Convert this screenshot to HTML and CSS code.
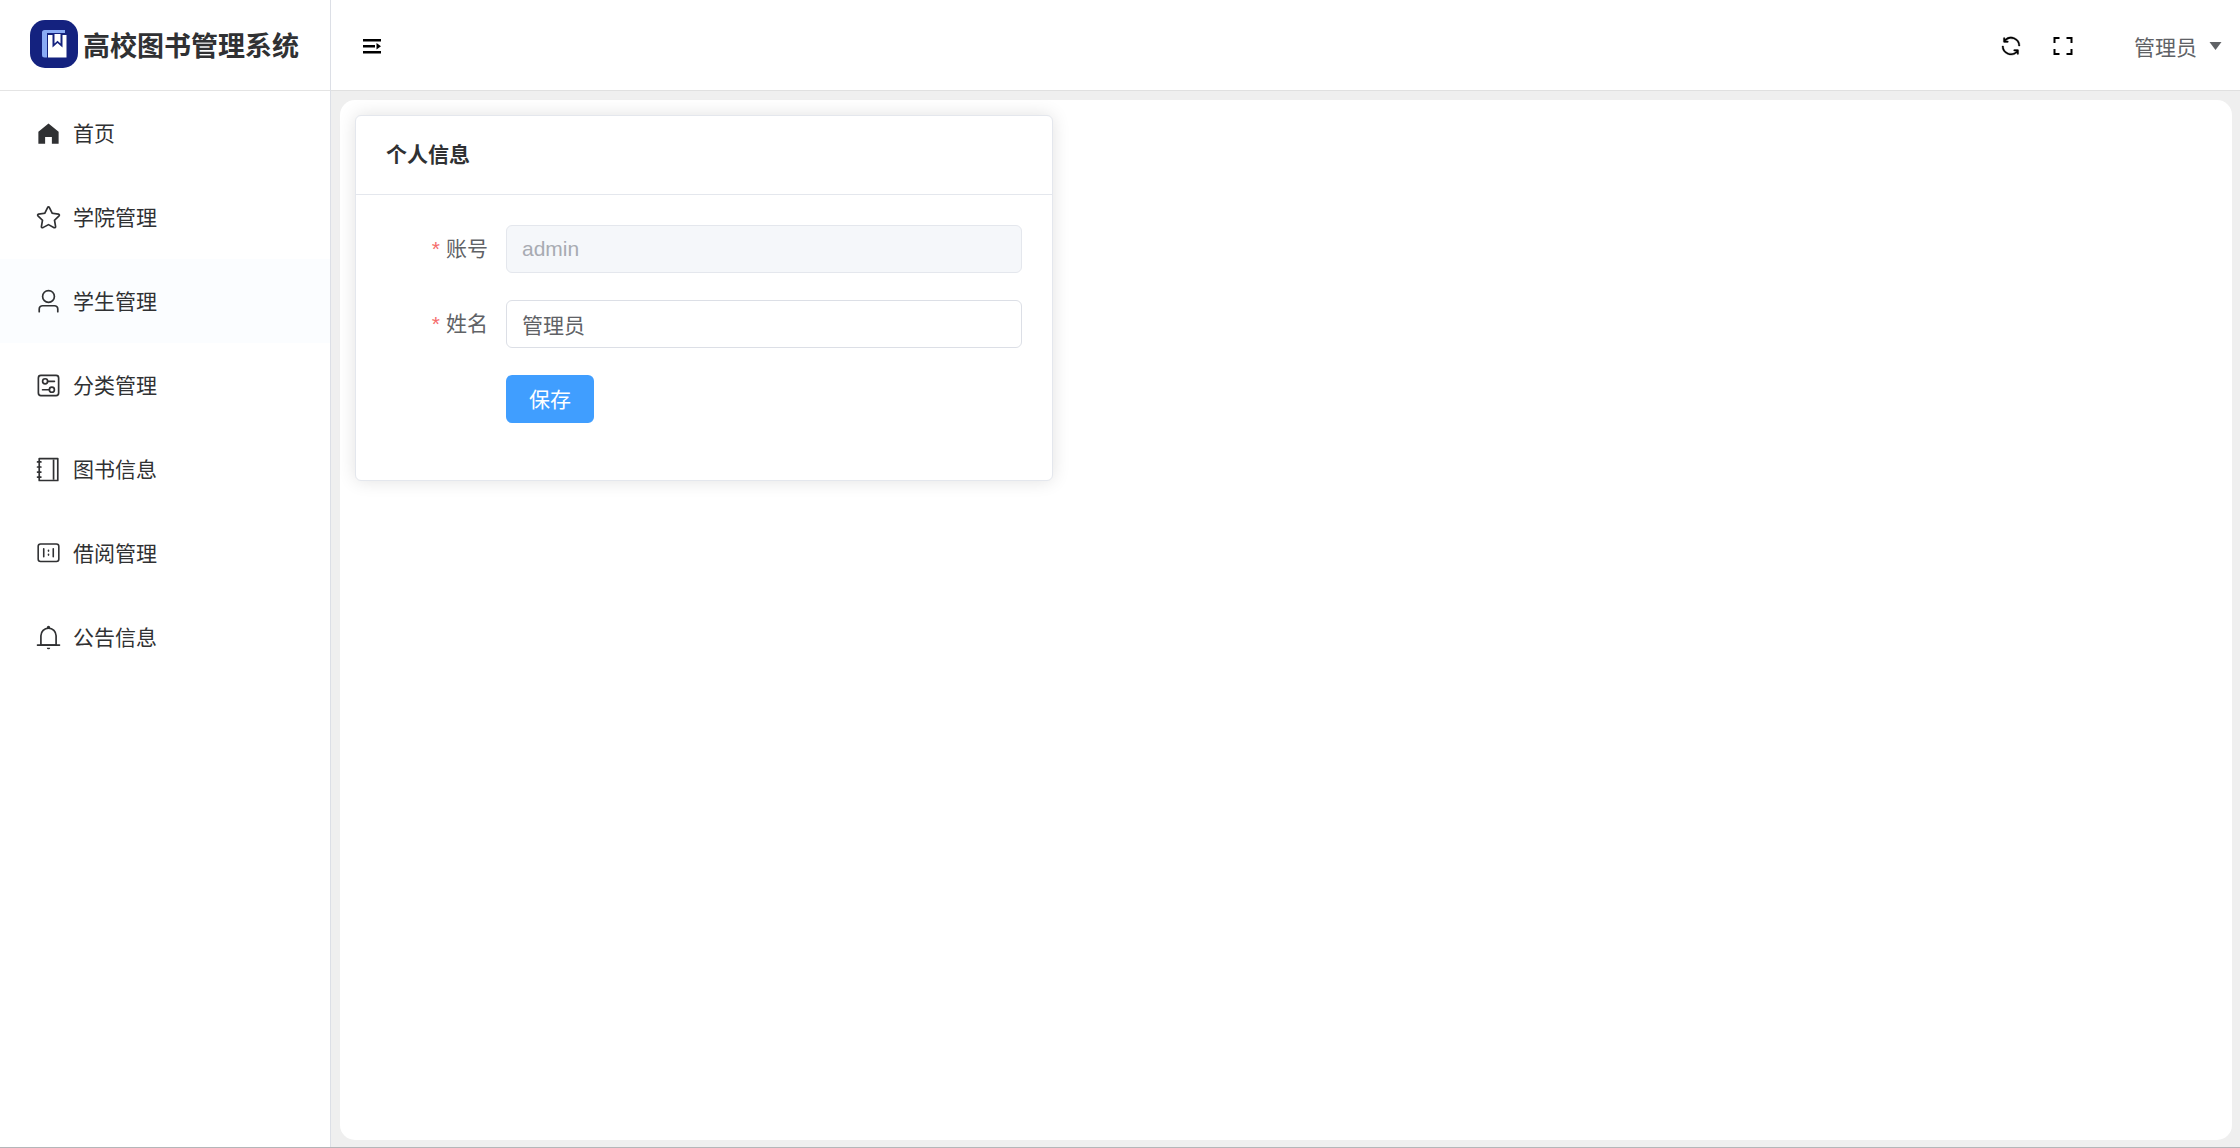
FILE: index.html
```html
<!DOCTYPE html>
<html lang="zh-CN">
<head>
    <meta charset="UTF-8">
    <meta name="viewport" content="width=device-width, initial-scale=1.0">
    <title>高校图书管理系统</title>
    <link rel="stylesheet" href="styles.css">
</head>
<body>
    <div class="layout">
        <aside class="sidebar">
            <div class="logo">
                <svg class="logo-icon" viewBox="0 0 48 48">
                    <rect width="48" height="48" rx="15" fill="#14227f"/>
                    <path d="M14.500 10H35v3H17v24.500h-2.500a2.500 2.500 0 0 1-2.500-2.500V12.500a2.500 2.500 0 0 1 2.500-2.500z" fill="#8aabf5"/>
                    <path d="M18 15h18.500v22.500H18z" fill="#fff"/>
                    <path d="M22.500 14h10v13.500l-5-4.500-5 4.500z" fill="#14227f"/>
                    <path d="M24.500 14h6v9.500l-3-2.700-3 2.700z" fill="#fff"/>
                </svg>
                <h1 class="logo-title">高校图书管理系统</h1>
            </div>

            <nav class="menu">
                <a class="menu-item" href="#home">
                    <svg class="menu-icon" viewBox="0 0 1024 1024"><path d="M512 128 128 447.936V896h255.936V640H640v256h255.936V447.936z"/></svg>
                    <span>首页</span>
                </a>
                <a class="menu-item" href="#college">
                    <svg class="menu-icon" viewBox="0 0 1024 1024"><path d="m512 747.84 228.16 119.936a6.4 6.4 0 0 0 9.28-6.72l-43.52-254.08 184.512-179.904a6.4 6.4 0 0 0-3.52-10.88l-255.104-37.12L517.76 147.904a6.4 6.4 0 0 0-11.52 0L392.192 379.072l-255.104 37.12a6.4 6.4 0 0 0-3.52 10.88L318.08 606.976l-43.584 254.08a6.4 6.4 0 0 0 9.28 6.72zM313.6 924.48a70.4 70.4 0 0 1-102.144-74.24l37.888-220.928L88.96 472.96A70.4 70.4 0 0 1 128 352.896l221.76-32.256 99.2-200.96a70.4 70.4 0 0 1 126.208 0l99.2 200.96 221.824 32.256a70.4 70.4 0 0 1 39.04 120.064L774.72 629.376l37.888 220.928a70.4 70.4 0 0 1-102.144 74.24L512 820.096l-198.4 104.32z"/></svg>
                    <span>学院管理</span>
                </a>
                <a class="menu-item active" href="#student">
                    <svg class="menu-icon" viewBox="0 0 1024 1024"><path d="M512 512a192 192 0 1 0 0-384 192 192 0 0 0 0 384m0 64a256 256 0 1 1 0-512 256 256 0 0 1 0 512m320 320v-96a96 96 0 0 0-96-96H288a96 96 0 0 0-96 96v96a32 32 0 1 1-64 0v-96a160 160 0 0 1 160-160h448a160 160 0 0 1 160 160v96a32 32 0 1 1-64 0"/></svg>
                    <span>学生管理</span>
                </a>
                <a class="menu-item" href="#category">
                    <svg class="menu-icon" viewBox="0 0 1024 1024"><path d="M224 160a64 64 0 0 0-64 64v576a64 64 0 0 0 64 64h576a64 64 0 0 0 64-64V224a64 64 0 0 0-64-64zm0-64h576a128 128 0 0 1 128 128v576a128 128 0 0 1-128 128H224A128 128 0 0 1 96 800V224A128 128 0 0 1 224 96"/><path d="M384 416a64 64 0 1 0 0-128 64 64 0 0 0 0 128m0 64a128 128 0 1 1 0-256 128 128 0 0 1 0 256"/><path d="M480 320h256q32 0 32 32t-32 32H480q-32 0-32-32t32-32m160 416a64 64 0 1 0 0-128 64 64 0 0 0 0 128m0 64a128 128 0 1 1 0-256 128 128 0 0 1 0 256"/><path d="M288 640h256q32 0 32 32t-32 32H288q-32 0-32-32t32-32"/></svg>
                    <span>分类管理</span>
                </a>
                <a class="menu-item" href="#book">
                    <svg class="menu-icon" viewBox="0 0 1024 1024"><path d="M192 128v768h640V128zm-32-64h704a32 32 0 0 1 32 32v832a32 32 0 0 1-32 32H160a32 32 0 0 1-32-32V96a32 32 0 0 1 32-32"/><path d="M672 128h64v768h-64zM96 192h128q32 0 32 32t-32 32H96q-32 0-32-32t32-32m0 192h128q32 0 32 32t-32 32H96q-32 0-32-32t32-32m0 192h128q32 0 32 32t-32 32H96q-32 0-32-32t32-32m0 192h128q32 0 32 32t-32 32H96q-32 0-32-32t32-32"/></svg>
                    <span>图书信息</span>
                </a>
                <a class="menu-item" href="#borrow">
                    <svg class="menu-icon" viewBox="0 0 1024 1024"><path d="M813.176 180.706a60.235 60.235 0 0 1 60.236 60.235v481.883a60.235 60.235 0 0 1-60.236 60.235H210.824a60.235 60.235 0 0 1-60.236-60.235V240.94a60.235 60.235 0 0 1 60.236-60.235zm0-60.235H210.824A120.47 120.47 0 0 0 90.353 240.94v481.883a120.47 120.47 0 0 0 120.47 120.47h602.353a120.47 120.47 0 0 0 120.471-120.47V240.94a120.47 120.47 0 0 0-120.47-120.47zm-120.47 180.705a30.118 30.118 0 0 0-30.118 30.118v301.177a30.118 30.118 0 0 0 60.236 0V331.294a30.118 30.118 0 0 0-30.118-30.118m-361.412 0a30.118 30.118 0 0 0-30.118 30.118v301.177a30.118 30.118 0 1 0 60.236 0V331.294a30.118 30.118 0 0 0-30.118-30.118M512 361.412a30.118 30.118 0 0 0-30.118 30.117v30.118a30.118 30.118 0 0 0 60.236 0V391.53A30.118 30.118 0 0 0 512 361.412M512 512a30.118 30.118 0 0 0-30.118 30.118v30.117a30.118 30.118 0 0 0 60.236 0v-30.117A30.118 30.118 0 0 0 512 512"/></svg>
                    <span>借阅管理</span>
                </a>
                <a class="menu-item" href="#notice">
                    <svg class="menu-icon" viewBox="0 0 1024 1024"><path d="M512 64a64 64 0 0 1 64 64v64H448v-64a64 64 0 0 1 64-64"/><path d="M256 768h512V448a256 256 0 1 0-512 0zm256-640a320 320 0 0 1 320 320v384H192V448a320 320 0 0 1 320-320"/><path d="M96 768h832q32 0 32 32t-32 32H96q-32 0-32-32t32-32m352 128h128a64 64 0 0 1-128 0"/></svg>
                    <span>公告信息</span>
                </a>
            </nav>
        </aside>

        <div class="container">
            <header class="header">
                <button class="icon-button" type="button" aria-label="折叠菜单">
                    <svg viewBox="0 0 24 24"><path d="M3 5h18v2.500H3zM3 11h12v2.500H3zM3 17h18v2.500H3zM16.500 9l4.500 3.250-4.500 3.250z"/></svg>
                </button>
                <div class="header-right">
                    <button class="icon-button" type="button" aria-label="刷新">
                        <svg viewBox="0 0 1024 1024"><path d="M771.776 794.88A384 384 0 0 1 128 512h64a320 320 0 0 0 555.712 216.448H654.72a32 32 0 1 1 0-64h149.056a32 32 0 0 1 32 32v148.928a32 32 0 1 1-64 0v-50.56zM276.288 295.616h92.992a32 32 0 0 1 0 64H220.16a32 32 0 0 1-32-32V178.56a32 32 0 0 1 64 0v50.56A384 384 0 0 1 896.128 512h-64a320 320 0 0 0-555.776-216.384z" stroke="currentColor" stroke-width="14"/></svg>
                    </button>
                    <button class="icon-button" type="button" aria-label="全屏">
                        <svg viewBox="0 0 24 24"><path d="M2.500 3h6v2h-4v4h-2zM15.500 3h6v6h-2V5h-4zM2.500 15h2v4h4v2h-6zM19.500 15h2v6h-6v-2h4z"/></svg>
                    </button>
                    <button class="user-button" type="button">
                        管理员
                        <svg class="caret" viewBox="0 0 12 8"><path d="M0 0h12L6 8z"/></svg>
                    </button>
                </div>
            </header>

            <main class="main">
                <div class="page">
                    <section class="card">
                        <h2 class="card-header">个人信息</h2>
                        <form class="card-body">
                            <div class="form-item">
                                <label class="form-label" for="username">账号</label>
                                <input class="form-input" type="text" id="username" value="admin" disabled>
                            </div>
                            <div class="form-item">
                                <label class="form-label" for="name">姓名</label>
                                <input class="form-input" type="text" id="name" value="管理员">
                            </div>
                            <div class="form-item form-action">
                                <button class="save-button" type="button">保存</button>
                            </div>
                        </form>
                    </section>
                </div>
            </main>
        </div>
    </div>
</body>
</html>
```
FILE: styles.css
```css
* {
    box-sizing: border-box;
}

body {
    margin: 0;
    font-family: "Liberation Sans", "Noto Sans CJK SC", sans-serif;
    font-size: 21px;
    color: #303133;
}

button, input {
    font: inherit;
}

button {
    border: none;
    cursor: pointer;
}

.layout {
    display: flex;
    min-height: 100vh;
    border-bottom: 1px solid #b4b6b9;
}

/* Sidebar */
.sidebar {
    flex: none;
    width: 331px;
    border-right: 1px solid #dcdfe6;
    background-color: #fff;
}

.logo {
    display: flex;
    align-items: center;
    gap: 5px;
    height: 91px;
    padding: 0 30px 2px;
    border-bottom: 1px solid #e4e4e4;
}

.logo-icon {
    width: 48px;
    height: 48px;
}

.logo-title {
    margin: 0;
    font-size: 27px;
    font-weight: 700;
    white-space: nowrap;
}

.menu-item {
    display: flex;
    align-items: center;
    gap: 11px;
    height: 84px;
    padding: 0 35px;
    color: #303133;
    text-decoration: none;
}

.menu-item:hover, .menu-item.active {
    background-color: #fbfdff;
}

.menu-item span {
    padding-bottom: 3px;
}

.menu-icon {
    width: 27px;
    height: 27px;
    fill: currentColor;
}

/* Header */
.container {
    flex: 1;
    display: flex;
    flex-direction: column;
    min-width: 0;
}

.header {
    display: flex;
    align-items: center;
    justify-content: space-between;
    height: 91px;
    padding: 2px 18px 0 29px;
    border-bottom: 1px solid #e0e0e0;
    background-color: #fff;
}

.header-right {
    display: flex;
    align-items: center;
    gap: 28px;
}

.icon-button {
    display: flex;
    padding: 0;
    background: none;
    color: #000;
}

.icon-button svg {
    width: 24px;
    height: 24px;
    fill: currentColor;
}

.user-button {
    display: flex;
    align-items: center;
    gap: 12px;
    margin-left: 31px;
    padding: 0;
    background: none;
    color: #606266;
}

.caret {
    width: 13px;
    height: 8px;
    fill: currentColor;
}

/* Content */
.main {
    flex: 1;
    display: flex;
    padding: 9px 8px 7px 9px;
    background-color: #efefef;
}

.page {
    flex: 1;
    padding: 15px;
    border-radius: 15px;
    background-color: #fff;
}

.card {
    width: 37.5%;
    border: 1px solid #e4e7ed;
    border-radius: 6px;
    background-color: #fff;
    box-shadow: 0 0 18px rgba(0, 0, 0, 0.12);
}

.card-header {
    margin: 0;
    padding: 24px 30px;
    border-bottom: 1px solid #e4e7ed;
    font-size: 21px;
    font-weight: 700;
    line-height: 30px;
}

.card-body {
    padding: 30px;
}

.form-item {
    display: flex;
    margin-bottom: 27px;
}

.form-label {
    flex: none;
    width: 120px;
    padding-right: 18px;
    color: #606266;
    line-height: 48px;
    text-align: right;
}

.form-label::before {
    content: "*";
    margin-right: 6px;
    color: #f56c6c;
}

.form-input {
    flex: 1;
    min-width: 0;
    height: 48px;
    padding: 0 15px;
    border: 1px solid #dcdfe6;
    border-radius: 6px;
    background-color: #fff;
    color: #606266;
}

.form-input:disabled {
    border-color: #e4e7ed;
    background-color: #f5f7fa;
    color: #a8abb2;
}

.form-action {
    padding-left: 120px;
}

.save-button {
    height: 48px;
    padding: 0 23px 2px;
    border-radius: 6px;
    background-color: #409eff;
    color: #fff;
}
```
